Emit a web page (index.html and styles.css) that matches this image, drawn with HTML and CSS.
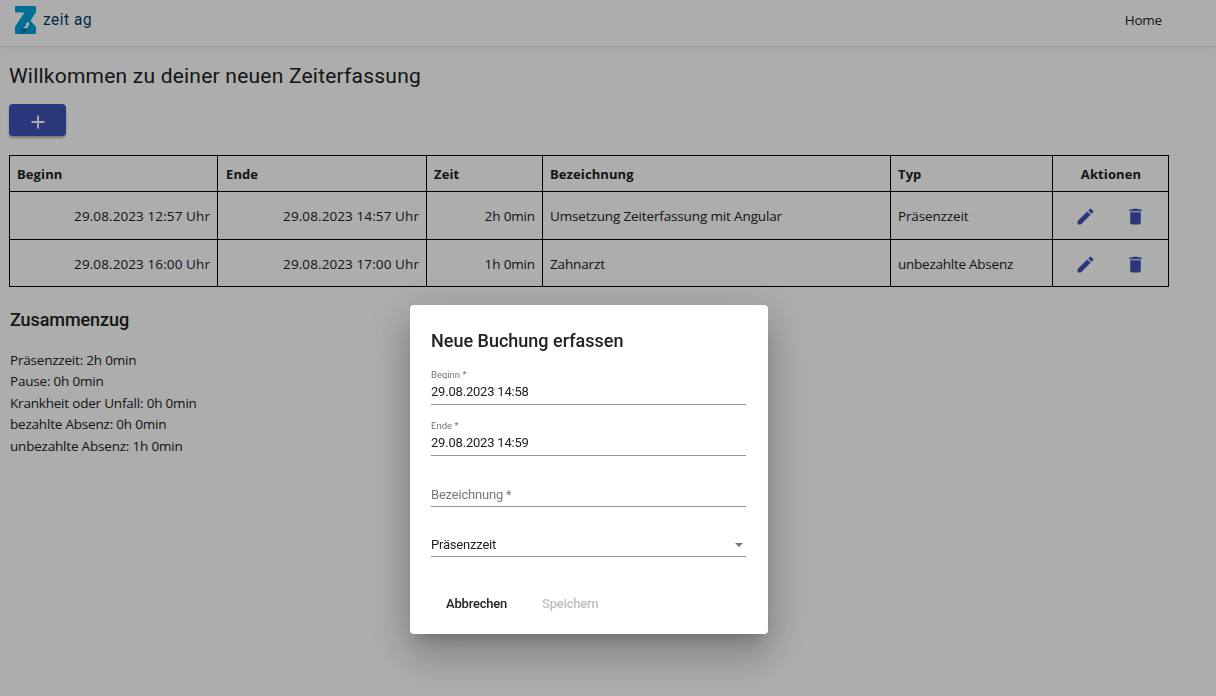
FILE: index.html
```html
<!DOCTYPE html>
<html lang="de">
<head>
<meta charset="utf-8">
<title>Zeiterfassung</title>
<link rel="stylesheet" href="styles.css">
</head>
<body>
<svg class="defs" width="0" height="0">
  <symbol id="edit" viewBox="0 0 24 24"><path d="M3 17.25V21h3.75L17.81 9.94l-3.75-3.75L3 17.25zM20.71 7.04a1 1 0 0 0 0-1.41l-2.34-2.34a1 1 0 0 0-1.41 0l-1.83 1.83 3.75 3.75 1.83-1.83z"/></symbol>
  <symbol id="delete" viewBox="0 0 24 24"><path d="M6 19c0 1.1.9 2 2 2h8c1.1 0 2-.9 2-2V7H6v12zM19 4h-3.500l-1-1h-5l-1 1H5v2h14V4z"/></symbol>
</svg>
<header class="navbar">
  <div class="brand">
    <svg class="brand-mark" viewBox="0 0 21 28" width="21" height="28">
      <defs><linearGradient id="shade" x1="1" y1="0" x2="0" y2="1"><stop offset="0" stop-color="#006a9e"/><stop offset="1" stop-color="#0088be"/></linearGradient></defs>
      <path d="M1 0H20Q21 0 21 1V6L15.500 14.500L21 21V27Q21 28 20 28H1Q0 28 0 27V20.500L9.500 6.500H1Q0 6.500 0 5.500V1Q0 0 1 0Z" fill="#00a4dc"/>
      <path d="M4 28L8 22H13L9 28Z" fill="url(#shade)"/>
      <path d="M8 22.300L11.500 19L10.500 18L14 15.500V20L13 19.500L12.500 22.300Z" fill="#fff"/>
    </svg>
    <span class="brand-name">zeit ag</span>
  </div>
  <nav><a class="nav-link">Home</a></nav>
</header>
<main class="content">
  <h1 class="title">Willkommen zu deiner neuen Zeiterfassung</h1>
  <button class="add"><svg viewBox="0 0 14 14" width="14" height="14"><path d="M7 .5V13.500M.5 7H13.500" stroke="#fff" stroke-width="1.900"/></svg></button>
  <table class="bookings">
    <colgroup><col class="c-begin"><col class="c-end"><col class="c-time"><col class="c-name"><col class="c-type"><col class="c-actions"></colgroup>
    <thead><tr><th>Beginn</th><th class="end">Ende</th><th>Zeit</th><th>Bezeichnung</th><th>Typ</th><th class="center">Aktionen</th></tr></thead>
    <tbody>
      <tr><td class="num date">29.08.2023 12:57 Uhr</td><td class="num date">29.08.2023 14:57 Uhr</td><td class="num">2h 0min</td><td>Umsetzung Zeiterfassung mit Angular</td><td>Präsenzzeit</td>
        <td><div class="actions"><svg class="icon"><use href="#edit"/></svg><svg class="icon"><use href="#delete"/></svg></div></td></tr>
      <tr><td class="num date">29.08.2023 16:00 Uhr</td><td class="num date">29.08.2023 17:00 Uhr</td><td class="num">1h 0min</td><td>Zahnarzt</td><td class="type">unbezahlte Absenz</td>
        <td><div class="actions"><svg class="icon"><use href="#edit"/></svg><svg class="icon"><use href="#delete"/></svg></div></td></tr>
    </tbody>
  </table>
  <h2 class="subtitle">Zusammenzug</h2>
  <div class="summary">
    <div>Präsenzzeit: 2h 0min</div>
    <div>Pause: 0h 0min</div>
    <div>Krankheit oder Unfall: 0h 0min</div>
    <div>bezahlte Absenz: 0h 0min</div>
    <div>unbezahlte Absenz: 1h 0min</div>
  </div>
</main>
<div class="backdrop">
  <section class="dialog" role="dialog">
    <h2 class="dialog-title">Neue Buchung erfassen</h2>
    <div class="field"><span class="label">Beginn *</span><span class="value">29.08.2023 14:58</span></div>
    <div class="field"><span class="label">Ende *</span><span class="value">29.08.2023 14:59</span></div>
    <div class="field empty"><span class="value placeholder">Bezeichnung *</span></div>
    <div class="field select"><span class="value">Präsenzzeit</span><span class="arrow"></span></div>
    <div class="dialog-actions"><button class="btn">Abbrechen</button><button class="btn" disabled>Speichern</button></div>
  </section>
</div>
</body>
</html>
```

FILE: styles.css
```css
* { box-sizing: border-box; }
body { margin: 0; height: 696px; overflow: hidden; background: #fff; color: #212121; font-family: "Open Sans", "Noto Sans", sans-serif; font-size: 13.5px; }
h1, h2 { margin: 0; font-family: Roboto, sans-serif; }
.defs { display: block; height: 0; }
.navbar { display: flex; justify-content: space-between; height: 47px; padding: 6px 54px 0 15px; border-bottom: 1px solid #e3e3e3; box-shadow: 0 2px 8px rgba(0,0,0,.05); }
.brand { display: flex; gap: 7px; }
.brand-name { margin-top: 3px; font: 17px/20px Roboto, sans-serif; color: #004068; transform: scaleX(.9); transform-origin: left; letter-spacing: .65px; }
.nav-link { display: block; line-height: 28px; letter-spacing: -.2px; }
.content { padding: 16px 9px 0; }
.title { font-size: 21px; font-weight: 400; line-height: 26px; letter-spacing: .22px; }
.add { display: flex; align-items: center; justify-content: center; width: 57px; height: 32px; margin: 15px 0 19px; padding: 3px 0 0; border: 0; border-radius: 4px; background: #3f51b5; box-shadow: 0 2px 2px rgba(0,0,0,.3); }
.bookings { table-layout: fixed; width: 1160px; border-collapse: separate; border-spacing: 0; border: solid #000; border-width: 1px 0 0 1px; }
.c-begin { width: 208px; } .c-end { width: 209px; } .c-time { width: 116px; } .c-name { width: 348px; } .c-type { width: 162px; } .c-actions { width: 116px; }
th, td { padding: 0 7px; border: solid #000; border-width: 0 1px 1px 0; text-align: left; white-space: nowrap; }
th { height: 36px; font-size: 13px; font-weight: 700; letter-spacing: .1px; }
.end { padding-left: 8px; }
td { height: 48px; padding-top: 1px; letter-spacing: -.14px; }
tr:last-child td { height: 47px; padding-top: 2px; }
.num { text-align: right; }
.date { letter-spacing: .1px; }
.type { letter-spacing: -.25px; }
.center { padding-left: 8px; text-align: center; }
.actions { display: flex; justify-content: center; gap: 29px; }
.icon { width: 21px; height: 21px; fill: #3f51b5; }
.subtitle { margin: 21px 0 0 1px; font-size: 18px; font-weight: 500; line-height: 24px; letter-spacing: -.08px; }
.summary { margin: 17.6px 0 0 1px; line-height: 21.5px; letter-spacing: -.2px; }
.backdrop { position: fixed; inset: 0; background: rgba(0,0,0,.32); }
.dialog { width: 358px; height: 329px; margin: 305px 0 0 410px; padding: 24px 22px 0 21px; border-radius: 4px; background: #fff; font-family: Roboto, sans-serif; font-size: 13px; box-shadow: 0 11px 15px -7px rgba(0,0,0,.2), 0 24px 38px 3px rgba(0,0,0,.14), 0 9px 46px 8px rgba(0,0,0,.12); }
.dialog-title { height: 25px; font-size: 18px; font-weight: 500; line-height: 24px; }
.field { display: flex; flex-direction: column; justify-content: flex-end; height: 51px; padding-bottom: 4px; border-bottom: 1px solid #949494; }
.label { height: 10px; overflow: hidden; font-size: 9.5px; line-height: 11px; color: #777; }
.value { line-height: 16px; letter-spacing: -.2px; }
.label + .value { margin-top: 5px; }
.placeholder { color: #777; }
.empty { padding-bottom: 3px; }
.select { flex-direction: row; align-items: flex-end; justify-content: space-between; height: 50px; padding-bottom: 3px; }
.arrow { margin: 0 3px 6px 0; border: 4px solid transparent; border-top-color: #757575; border-bottom: 0; }
.dialog-actions { display: flex; gap: 5px; margin-top: 28px; }
.btn { height: 36px; padding: 0 15px; border: 0; background: none; font: 500 13px Roboto, sans-serif; letter-spacing: -.2px; color: #212121; }
.btn:disabled { color: #bdbdbd; }
```
